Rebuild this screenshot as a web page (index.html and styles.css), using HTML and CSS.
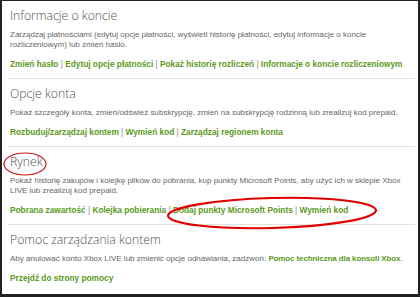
FILE: index.html
```html
<!DOCTYPE html>
<html lang="pl">
<head>
<meta charset="utf-8">
<link rel="stylesheet" href="styles.css">
</head>
<body>
<div class="frame">
  <section class="sec">
    <h2 class="title">Informacje o koncie</h2>
    <p class="desc">Zarządzaj płatnościami (edytuj opcje płatności, wyświetl historię płatności, edytuj informacje o koncie rozliczeniowym) lub zmień hasło.</p>
    <p class="links"><a>Zmień hasło</a> | <a>Edytuj opcje płatności</a> | <a>Pokaż historię rozliczeń</a> | <a>Informacje o koncie rozliczeniowym</a></p>
  </section>
  <section class="sec">
    <h2 class="title">Opcje konta</h2>
    <p class="desc">Pokaż szczegóły konta, zmień/odśwież subskrypcję, zmień na subskrypcję rodzinną lub zrealizuj kod prepaid.</p>
    <p class="links"><a>Rozbuduj/zarządzaj kontem</a> | <a>Wymień kod</a> | <a>Zarządzaj regionem konta</a></p>
  </section>
  <section class="sec">
    <h2 class="title">Rynek</h2>
    <p class="desc">Pokaż historię zakupów i kolejkę plików do pobrania, kup punkty Microsoft Points, aby użyć ich w sklepie Xbox LIVE lub zrealizuj kod prepaid.</p>
    <p class="links"><a>Pobrana zawartość</a> | <a>Kolejka pobierania</a> | <a>Dodaj punkty Microsoft Points</a> | <a>Wymień kod</a></p>
  </section>
  <section class="sec last">
    <h2 class="title">Pomoc zarządzania kontem</h2>
    <p class="desc">Aby anulować konto Xbox LIVE lub zmienić opcje odnawiania, zadzwoń: <a>Pomoc techniczna dla konsoli Xbox</a>.</p>
    <p class="links"><a>Przejdź do strony pomocy</a></p>
  </section>
  <svg class="marks" width="420" height="297" viewBox="0 0 420 297">
    <ellipse cx="25" cy="164" rx="21" ry="11" fill="none" stroke="#c81818" stroke-width="1.2"/>
    <ellipse cx="272" cy="213" rx="104" ry="15" fill="none" stroke="#e00000" stroke-width="2.2" transform="rotate(-1.5 272 213)"/>
  </svg>
</div>
</body>
</html>
```
FILE: styles.css
```css
html, body {
  margin: 0;
  padding: 0;
  background: #fff;
}
.frame {
  position: relative;
  width: 420px;
  height: 297px;
  box-sizing: border-box;
  border-top: 1px solid #222;
  border-left: 2px solid #222;
  border-right: 2px solid #222;
  border-bottom: 3px solid #222;
  padding: 0 3px 0 6px;
  overflow: hidden;
  font-family: "Liberation Sans", Arial, sans-serif;
}
.sec {
  border-bottom: 1px solid #e2e2e2;
  padding: 7px 0 9px 2px;
}
.sec.last {
  border-bottom: none;
}
.title {
  margin: 0;
  font-family: "Open Sans", "Liberation Sans", sans-serif;
  font-size: 12.2px;
  font-weight: 300;
  color: #505050;
  line-height: 16px;
}
.desc {
  margin: 6px 0 0;
  font-size: 8px;
  line-height: 10px;
  color: #666;
}
.desc a {
  letter-spacing: -0.12px;
}
.links {
  margin: 9px 0 0;
  font-size: 8.3px;
  line-height: 10px;
  color: #888;
}
a {
  color: #5b9a1c;
  font-weight: bold;
}
.marks {
  position: absolute;
  left: -2px;
  top: -1px;
  pointer-events: none;
}
```
